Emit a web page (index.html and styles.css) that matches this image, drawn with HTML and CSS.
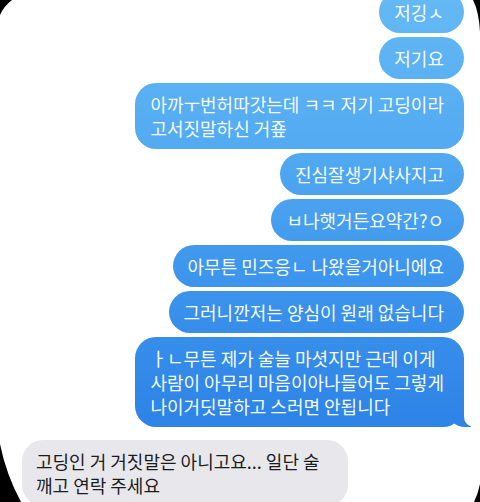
FILE: index.html
```html
<!DOCTYPE html>
<html>
<head>
    <meta charset="utf-8">
    <link rel="stylesheet" href="styles.css">
    <title>Messages</title>
</head>
<body>
    <div class="chat">
        <div class="bubble out">저깅ㅅ</div>
        <div class="bubble out">저기요</div>
        <div class="bubble out">아까ㅜ번허따갓는데 ㅋㅋ 저기 고딩이라<br>고서짓말하신 거죺</div>
        <div class="bubble out">진심잘생기샤사지고</div>
        <div class="bubble out">ㅂ나햇거든요약간?ㅇ</div>
        <div class="bubble out">아무튼 민즈응ㄴ 나왔을거아니에요</div>
        <div class="bubble out">그러니깐저는 양심이 원래 없습니다</div>
        <div class="bubble out tail">ㅏㄴ무튼 제가 술늘 마셧지만 근데 이게<br>사람이 아무리 마음이아나들어도 그렇게<br>나이거딧말하고 스러면 안됩니다</div>
        <div class="bubble in">고딩인 거 거짓말은 아니고요... 일단 술<br>깨고 연락 주세요</div>
    </div>

    <!-- dark corners of the photographed screen -->
    <svg class="corners" width="480" height="502" viewBox="0 0 480 502">
        <path d="M0 0 H12 Q4 6 0 15 Z" fill="#000"/>
        <path d="M473 0 H480 V32 Q479 12 473 0 Z" fill="#000"/>
        <path d="M0 444 Q6 474 21 502 H0 Z" fill="#000"/>
        <path d="M480 484 V502 H474 Q478 494 480 484 Z" fill="#000"/>
    </svg>
</body>
</html>
```

FILE: styles.css
```css
* {
    margin: 0;
    padding: 0;
    box-sizing: border-box;
}

body {
    width: 480px;
    height: 502px;
    overflow: hidden;
    background-color: #fff;
    font-family: "Noto Sans CJK KR", "Noto Sans", sans-serif;
    position: relative;
}

/* message list */
.chat {
    display: flex;
    flex-direction: column;
    align-items: flex-end;
    gap: 4px;
    padding: 0 16px 0 22px;
    margin-top: -9px;
}

.bubble {
    position: relative;
    white-space: nowrap;
    font-size: 18px;
    line-height: 24px;
    padding: 9px 20px 9px 15px;
    border-radius: 21px;
}

/* sent messages - blue gradient */
.out {
    color: #f6faff;
    background: linear-gradient(to bottom, #64b9f4 0px, #52aaf1 150px, #3b93ec 290px, #2d83e6 430px) fixed;
}

.tail::before {
    content: "";
    position: absolute;
    right: -7px;
    bottom: 0;
    width: 22px;
    height: 20px;
    background: linear-gradient(to bottom, #64b9f4 0px, #52aaf1 150px, #3b93ec 290px, #2d83e6 430px) fixed;
    border-bottom-left-radius: 16px 14px;
}

.tail::after {
    content: "";
    position: absolute;
    right: -26px;
    bottom: 0;
    width: 26px;
    height: 20px;
    background-color: #fff;
    border-bottom-left-radius: 10px;
}

/* received message - gray */
.in {
    align-self: flex-start;
    margin-top: 9px;
    color: #1c1c1e;
    background-color: #e8e8ec;
    padding: 9px 28px 9px 14px;
}

.corners {
    position: absolute;
    top: 0;
    left: 0;
}
```
